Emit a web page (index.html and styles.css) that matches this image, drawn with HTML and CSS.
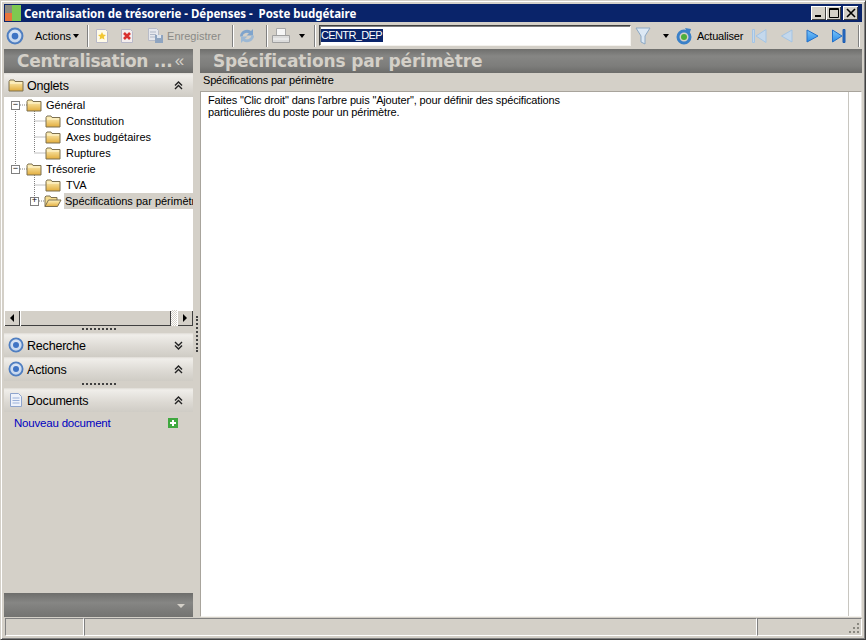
FILE: index.html
```html
<!DOCTYPE html>
<html lang="fr">
<head>
<meta charset="utf-8">
<title>Centralisation de trésorerie</title>
<link rel="stylesheet" href="styles.css">
</head>
<body>
<svg class="defs" width="0" height="0">
  <defs>
    <linearGradient id="fold" x1="0" y1="0" x2="0" y2="1"><stop offset="0" stop-color="#fff4c0"/><stop offset="1" stop-color="#e2ac3c"/></linearGradient>
    <linearGradient id="navon" x1="0" y1="0" x2="0" y2="1"><stop offset="0" stop-color="#7cc4f8"/><stop offset="1" stop-color="#2a8ce8"/></linearGradient>
    <radialGradient id="ring" cx="0.5" cy="0.4" r="0.6"><stop offset="0" stop-color="#e8eef8"/><stop offset="1" stop-color="#bcd0ea"/></radialGradient>
    <symbol id="folder" viewBox="0 0 16 16"><path d="M1 4.500 2 3h4l1 1.500h8V14H1z" fill="url(#fold)" stroke="#7d7050" stroke-width="1"/><path d="M2 6h12" stroke="#fff8d8"/></symbol>
    <symbol id="folder-open" viewBox="0 0 18 16"><path d="M1 13.500V4l1-1h4l1 1.500h6V7" fill="#f5dc90" stroke="#7d7050"/><path d="M1 13.500 4.500 7H17l-3.500 6.500z" fill="url(#fold)" stroke="#7d7050"/></symbol>
    <symbol id="orb" viewBox="0 0 16 16"><circle cx="8" cy="8" r="6.600" fill="url(#ring)" stroke="#4f7ec0" stroke-width="1.800"/><circle cx="8" cy="8" r="3" fill="#3f74c4"/></symbol>
    <symbol id="up2" viewBox="0 0 9 9"><path d="M1 4.500 4.500 1 8 4.500M1 8 4.500 4.500 8 8" fill="none" stroke="#222" stroke-width="1.400"/></symbol>
    <symbol id="down2" viewBox="0 0 9 9"><path d="M1 1 4.500 4.500 8 1M1 4.500 4.500 8 8 4.500" fill="none" stroke="#222" stroke-width="1.400"/></symbol>
  </defs>
</svg>
<div class="window">
  <header class="titlebar">
    <svg class="appicon" width="16" height="16" viewBox="0 0 16 16"><rect width="7" height="8" fill="#8a8a80"/><rect y="8" width="7" height="8" fill="#e8743c"/><rect x="7" width="9" height="16" fill="#7ec850"/></svg>
    <span class="title">Centralisation de trésorerie - Dépenses -&nbsp; Poste budgétaire</span>
    <div class="winbtns">
      <span class="winbtn"><svg width="10" height="10" viewBox="0 0 10 10"><path d="M1 7h6v2H1z"/></svg></span>
      <span class="winbtn"><svg width="10" height="10" viewBox="0 0 10 10"><path d="M.5.5h9v9h-9zM.5 1.500h9" fill="none" stroke="#000"/></svg></span>
      <span class="winbtn last"><svg width="10" height="10" viewBox="0 0 10 10"><path d="M1 1l8 8M9 1l-8 8" stroke="#000" stroke-width="1.600"/></svg></span>
    </div>
  </header>

  <div class="toolbar">
    <svg class="t-orb" width="18" height="18"><use href="#orb"/></svg>
    <span class="t-actions">Actions</span><span class="caret"></span>
    <span class="sep s1"></span>
    <svg class="t-icon new" width="16" height="16" viewBox="0 0 16 16"><path d="M2.500 1.500h9l2 2v11h-11z" fill="#fffbe8" stroke="#b8b8c8"/><path d="M8 4l1.200 2.600 2.800.3-2.100 1.900.6 2.800L8 10.200 5.500 11.600l.6-2.800L4 6.900l2.800-.3z" fill="#f2c832"/></svg>
    <svg class="t-icon del" width="16" height="16" viewBox="0 0 16 16"><path d="M2.500 1.500h9l2 2v11h-11z" fill="#f4eeee" stroke="#b8b8c8"/><path d="M5 5l6 6M11 5l-6 6" stroke="#d83030" stroke-width="2.600"/></svg>
    <svg class="t-icon save" width="18" height="17" viewBox="0 0 18 17"><path d="M1.500 1.500h8l2 2v10h-10z" fill="#e6e8ee" stroke="#b8bcc8"/><path d="M3 5h6M3 7.500h6M3 10h6" stroke="#b0b8c8"/><rect x="8" y="8" width="8" height="8" fill="#8ea4c0"/><rect x="10" y="8" width="4" height="3" fill="#dde4ee"/></svg>
    <span class="t-label muted">Enregistrer</span>
    <span class="sep s2"></span>
    <svg class="t-icon refresh" width="18" height="18" viewBox="0 0 18 18"><path d="M2 9.500a7 7 0 0 1 11-5.500l2-2v6.500H8.500L11 6.200a4.500 4.500 0 0 0-6.500 3.300z" fill="#7fa4cc"/><path d="M16 8.500a7 7 0 0 1-11 5.500l-2 2V9.500h6.500L7 11.800a4.500 4.500 0 0 0 6.500-3.300z" fill="#9cb8d4"/></svg>
    <span class="sep s3"></span>
    <svg class="t-icon print" width="20" height="18" viewBox="0 0 20 18"><path d="M5.500 1.500h9v7h-9z" fill="#f6f6f6" stroke="#a8a8a8"/><path d="M1.500 8.500h17v7h-17z" fill="#dcdcdc" stroke="#a0a0a0"/><path d="M2 12h16" stroke="#f6f6f6"/></svg>
    <span class="caret print-caret"></span>
    <span class="sep s4"></span>
    <div class="field"><span class="sel">CENTR_DEP</span></div>
    <svg class="t-filter" width="16" height="20" viewBox="0 0 16 20"><path d="M1 2h14l-5 8v8l-4-2v-6z" fill="#dce8f4" stroke="#8ca8c4"/></svg>
    <span class="caret filter-caret"></span>
    <svg class="t-go" width="18" height="18" viewBox="0 0 18 18"><circle cx="9" cy="10" r="6" fill="none" stroke="#3a80c8" stroke-width="3"/><circle cx="9" cy="10" r="3" fill="#4cae3c"/><path d="M10 1l6 1-2 6z" fill="#3a80c8"/></svg>
    <span class="t-label refresh-label">Actualiser</span>
    <svg class="nav n1" width="16" height="16" viewBox="0 0 16 16"><path d="M1.500 1.500h2v13h-2z" fill="#c4d8ec" stroke="#a4c4e4"/><path d="M15 1.500v13L5 8z" fill="#c4d8ec" stroke="#a4c4e4"/></svg>
    <svg class="nav n2" width="16" height="16" viewBox="0 0 16 16"><path d="M14 2v12L3.500 8z" fill="#c4d8ec" stroke="#a4c4e4"/></svg>
    <svg class="nav n3" width="16" height="16" viewBox="0 0 16 16"><path d="M3 2v12L14 8z" fill="url(#navon)" stroke="#2470c8"/></svg>
    <svg class="nav n4" width="16" height="16" viewBox="0 0 16 16"><path d="M1.500 2v12L11 8z" fill="url(#navon)" stroke="#2470c8"/><path d="M12 1.500h2v13h-2z" fill="#2a6cc4" stroke="#1c5cb0"/></svg>
    <span class="sep s5"></span>
  </div>

  <main class="main">
    <aside class="left">
      <h2 class="bighead left-head"><span>Centralisation ...</span><span class="chev">«</span></h2>
      <div class="panelhead"><svg width="16" height="16"><use href="#folder"/></svg><span class="ph-label">Onglets</span><svg class="ph-chev" width="9" height="9"><use href="#up2"/></svg></div>
      <div class="tree">
        <svg class="tree-lines" width="60" height="112" viewBox="0 0 60 112"><path d="M11.500 8v64M30.500 8v48M30.500 76v24M30.500 24h11M30.500 40h11M30.500 56h11M30.500 88h11M35 104h6M16 8h7M16 72h7" fill="none" stroke="#808080" stroke-dasharray="1 1"/></svg>
        <div class="row l1"><span class="box">−</span><svg width="16" height="16"><use href="#folder"/></svg><span class="lbl">Général</span></div>
        <div class="row l2"><svg width="16" height="16"><use href="#folder"/></svg><span class="lbl">Constitution</span></div>
        <div class="row l2"><svg width="16" height="16"><use href="#folder"/></svg><span class="lbl">Axes budgétaires</span></div>
        <div class="row l2"><svg width="16" height="16"><use href="#folder"/></svg><span class="lbl">Ruptures</span></div>
        <div class="row l1"><span class="box">−</span><svg width="16" height="16"><use href="#folder"/></svg><span class="lbl">Trésorerie</span></div>
        <div class="row l2"><svg width="16" height="16"><use href="#folder"/></svg><span class="lbl">TVA</span></div>
        <div class="row l2 open"><span class="box">+</span><svg width="18" height="16"><use href="#folder-open"/></svg><span class="lbl selected">Spécifications par périmètre</span></div>
      </div>
      <div class="hscroll">
        <span class="sbtn"><i class="tri-l"></i></span>
        <span class="thumb"></span>
        <span class="track"></span>
        <span class="sbtn"><i class="tri-r"></i></span>
      </div>
      <div class="grip"></div>
      <div class="panelhead"><svg width="16" height="16"><use href="#orb"/></svg><span class="ph-label">Recherche</span><svg class="ph-chev" width="9" height="9"><use href="#down2"/></svg></div>
      <div class="panelhead"><svg width="16" height="16"><use href="#orb"/></svg><span class="ph-label">Actions</span><svg class="ph-chev" width="9" height="9"><use href="#up2"/></svg></div>
      <div class="grip"></div>
      <div class="panelhead"><svg width="16" height="16" viewBox="0 0 16 16"><path d="M2.500 1.500h8l3 3v10h-11z" fill="#eef2fa" stroke="#8ea4cc"/><path d="M4.500 6h7M4.500 8.500h7M4.500 11h7" stroke="#9ab0d8"/></svg><span class="ph-label">Documents</span><svg class="ph-chev" width="9" height="9"><use href="#up2"/></svg></div>
      <div class="docs">
        <span class="link">Nouveau document</span>
        <svg width="10" height="10" viewBox="0 0 10 10"><rect width="10" height="10" fill="#3fa83f"/><path d="M5 2v6M2 5h6" stroke="#fff" stroke-width="2"/></svg>
      </div>
      <div class="spacer"></div>
      <div class="bottombar"><span class="bottom-tri"></span></div>
    </aside>
    <div class="vsplit"><span class="vgrip"></span></div>
    <section class="right">
      <h1 class="bighead right-head">Spécifications par périmètre</h1>
      <div class="subhead">Spécifications par périmètre</div>
      <div class="content">
        <div class="text">Faites "Clic droit" dans l'arbre puis "Ajouter", pour définir des spécifications<br>particulières du poste pour un périmètre.</div>
        <div class="vtrack"></div>
      </div>
    </section>
  </main>

  <footer class="status">
    <span class="cell c1"></span>
    <span class="cell c2"></span>
    <span class="cell c3"><svg class="resize" width="12" height="12" viewBox="0 0 12 12"><path d="M9 1h2v2H9zM5 5h2v2H5zM9 5h2v2H9zM1 9h2v2H1zM5 9h2v2H5zM9 9h2v2H9z" fill="#8a8880"/></svg></span>
  </footer>
</div>
</body>
</html>
```
FILE: styles.css
```css
* { box-sizing: border-box; }
html, body { margin: 0; padding: 0; }
body { width: 866px; height: 640px; overflow: hidden; background: #d4d0c8; font-family: "Liberation Sans", Arial, sans-serif; font-size: 11px; color: #000; }
.defs { position: absolute; }
.window { width: 866px; height: 640px; display: flex; flex-direction: column; border: 1px solid #d4d0c8; border-right-color: #404040; border-bottom-color: #404040; box-shadow: inset 1px 1px 0 #fff, inset -1px -1px 0 #808080; padding: 3px 3px 2px; }

.titlebar { height: 18px; flex: none; background: #0a246a; display: flex; align-items: center; color: #fff; padding-right: 4px; }
.appicon { margin: 0 3px 0 1px; flex: none; }
.title { font-family: "Noto Sans", sans-serif; font-weight: bold; font-size: 11.5px; letter-spacing: -0.03px; white-space: nowrap; }
.winbtns { margin-left: auto; display: flex; }
.winbtn { width: 15px; height: 14px; background: #d4d0c8; display: flex; align-items: center; justify-content: center; box-shadow: inset 1px 1px 0 #fff, inset -1px -1px 0 #404040; }
.winbtn.last { margin-left: 2px; }

.toolbar { height: 27px; flex: none; display: flex; align-items: center; padding-left: 2px; }
.t-orb { flex: none; }
.t-actions { margin-left: 11px; font-size: 11px; }
.caret { width: 0; height: 0; border: 3.5px solid transparent; border-top: 4px solid #000; border-bottom: 0; margin-left: 2px; flex: none; }
.sep { width: 2px; height: 22px; border-left: 1px solid #808080; border-right: 1px solid #fff; flex: none; }
.s1 { margin-left: 8px; }
.t-icon { flex: none; }
.new { margin-left: 5px; }
.del { margin-left: 9px; }
.save { margin-left: 12px; }
.t-label { white-space: nowrap; }
.muted { color: #8a8a86; margin-left: 2px; }
.s2 { margin-left: 11px; }
.refresh { margin-left: 4px; }
.s3 { margin-left: 10px; }
.print { margin-left: 3px; }
.print-caret { margin-left: 8px; }
.s4 { margin-left: 9px; }
.field { width: 312px; height: 21px; background: #fff; margin-left: 3px; border: 1px solid; border-color: #404040 #f4f2ee #f4f2ee #404040; box-shadow: inset 1px 1px 0 #808080; padding-left: 1px; display: flex; align-items: center; flex: none; }
.sel { background: #0a246a; color: #fff; line-height: 13px; height: 13px; letter-spacing: -0.6px; padding-right: 1px; }
.t-filter { margin-left: 4px; flex: none; }
.filter-caret { margin-left: 12px; }
.t-go { margin-left: 6px; flex: none; }
.refresh-label { margin-left: 4px; letter-spacing: -0.2px; }
.nav { flex: none; }
.n1 { margin-left: 8px; }
.n2 { margin-left: 11px; }
.n3 { margin-left: 10px; }
.n4 { margin-left: 11px; }
.s5 { margin-left: 11px; }

.main { flex: 1; min-height: 0; display: flex; }
.left { width: 189px; flex: none; display: flex; flex-direction: column; }
.vsplit { width: 7px; flex: none; display: flex; flex-direction: column; align-items: center; }
.vgrip { width: 2px; height: 36px; margin-top: 267px; border-left: 2px dotted #404040; }
.right { flex: 1; min-width: 0; display: flex; flex-direction: column; }

.bighead { margin: 0; height: 24px; flex: none; background: linear-gradient(#6f6f6d, #868684 30%, #7d7d7b 70%, #6c6c6a); color: #d4d0c8; font-family: "DejaVu Sans", sans-serif; font-weight: bold; font-size: 17px; line-height: 24px; letter-spacing: -0.15px; white-space: nowrap; }
.left-head { display: flex; justify-content: space-between; padding: 0 9px 0 13px; overflow: hidden; letter-spacing: -0.28px; }
.chev { font-weight: normal; font-family: "Liberation Sans", sans-serif; font-size: 17px; }
.right-head { padding-left: 13px; }

.panelhead { height: 24px; flex: none; display: flex; align-items: center; padding: 0 10px 0 4px; background: linear-gradient(#dedbd5, #f0eeea 8%, #dcd9d3 60%, #cfccc5); font-size: 12.5px; }
.panelhead svg { flex: none; }
.ph-label { margin-left: 3px; padding-top: 2px; letter-spacing: -0.2px; }
.ph-chev { margin-left: auto; }

.tree { position: relative; height: 213px; flex: none; background: #fff; overflow: hidden; }
.tree-lines { position: absolute; left: 0; top: 0; }
.row { position: relative; height: 16px; display: flex; align-items: center; white-space: nowrap; }
.l1 { padding-left: 7px; }
.l2 { padding-left: 41px; }
.l1 > svg { margin-left: 6px; }
.row .lbl { margin-left: 4px; padding: 0 1px; line-height: 16px; }
.l1 .lbl { margin-left: 3px; }
.box { width: 9px; height: 9px; border: 1px solid #808080; background: #fff; font-size: 9px; line-height: 7px; text-align: center; flex: none; font-family: "Liberation Mono", monospace; }
.row.open { padding-left: 26px; }
.open > svg { margin-left: 5px; }
.row .selected { margin-left: 2px; background: #d4d0c8; flex: 1; overflow: hidden; }

.hscroll { height: 16px; flex: none; display: flex; background: #e8e6e2; }
.sbtn { width: 16px; height: 16px; background: #d4d0c8; box-shadow: inset 1px 1px 0 #fff, inset -1px -1px 0 #404040; display: flex; align-items: center; justify-content: center; flex: none; }
.thumb { width: 151px; height: 16px; background: #d4d0c8; box-shadow: inset 1px 1px 0 #fff, inset -1px -1px 0 #404040; flex: none; }
.track { flex: 1; background: repeating-conic-gradient(#d4d0c8 0 25%, #fff 0 50%) 0 0 / 2px 2px; }
.tri-l { border: 4px solid transparent; border-left: 0; border-right: 4px solid #000; }
.tri-r { border: 4px solid transparent; border-right: 0; border-left: 4px solid #000; }
.grip { height: 7px; flex: none; display: flex; justify-content: center; }
.grip::before { content: ""; width: 34px; height: 2px; margin-top: 2px; border-top: 2px dotted #404040; }

.docs { height: 22px; flex: none; display: flex; align-items: center; padding: 0 15px 0 10px; justify-content: space-between; }
.link { color: #0000c0; font-size: 11.5px; letter-spacing: -0.2px; }
.spacer { flex: 1; }
.bottombar { height: 24px; flex: none; background: linear-gradient(#6d6d6b, #868684 40%, #737371); display: flex; align-items: center; justify-content: flex-end; padding-right: 8px; }
.bottom-tri { border: 4px solid transparent; border-top: 4px solid #d4d0c8; border-bottom: 0; margin-top: 2px; }

.subhead { height: 15px; line-height: 14px; padding-left: 3px; flex: none; letter-spacing: -0.2px; }
.content { flex: 1; min-height: 0; display: flex; background: #fff; border: 1px solid #a8a49c; border-right-color: #e8e6e2; border-bottom-color: #f4f2ee; margin-top: 3px; }
.text { flex: 1; padding: 2px 0 0 7px; line-height: 12px; letter-spacing: -0.15px; }
.vtrack { width: 13px; flex: none; border-left: 1px solid #c8c6c0; }

.status { height: 19px; flex: none; display: flex; margin-top: 1px; }
.cell { height: 18px; border: 1px solid; border-color: #808080 #fff #fff #808080; flex: none; }
.c1 { width: 79px; margin-left: 1px; }
.c2 { width: 673px; }
.c3 { flex: 1; position: relative; }
.resize { position: absolute; right: 1px; bottom: 1px; }
```
